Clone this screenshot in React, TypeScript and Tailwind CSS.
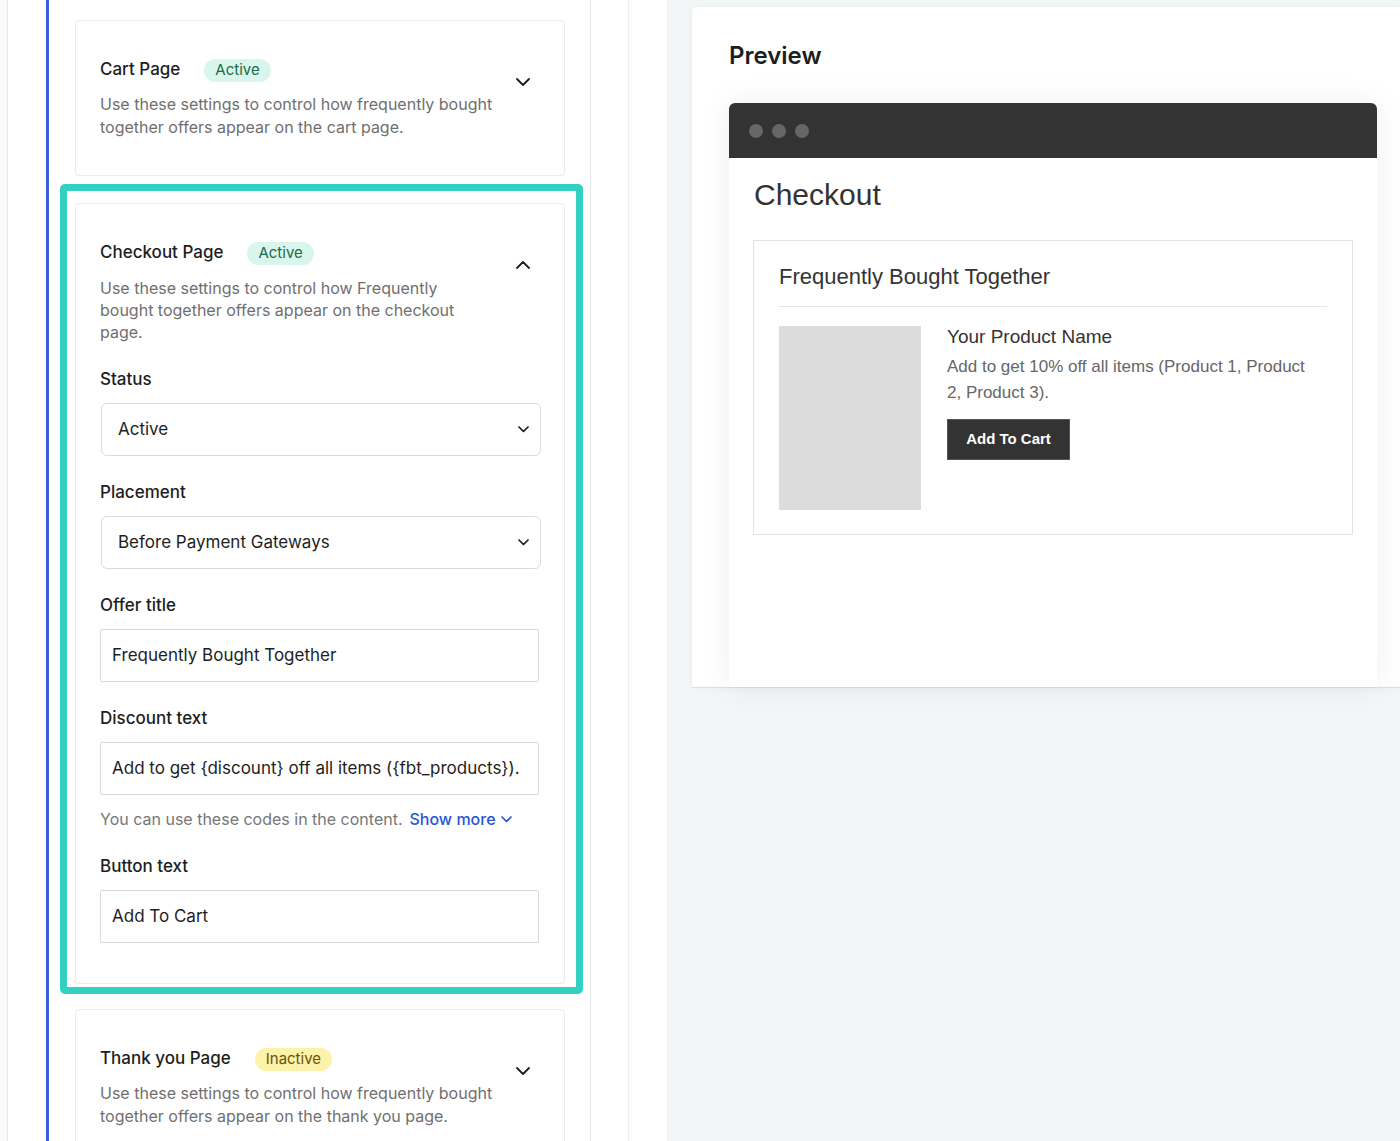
import type { ReactNode } from "react";

const sans = "font-['Inter','Noto_Sans',sans-serif]";

function Chevron({ up = false }: { up?: boolean }) {
  return (
    <svg width="14" height="8" viewBox="0 0 14 8" fill="none" className="shrink-0">
      <path
        d={up ? "M1 7l6-6 6 6" : "M1 1l6 6 6-6"}
        stroke="#1e1e1e"
        strokeWidth="1.8"
        strokeLinecap="round"
        strokeLinejoin="round"
      />
    </svg>
  );
}

function SmallChevron({ color = "#1e1e1e" }: { color?: string }) {
  return (
    <svg width="11" height="7" viewBox="0 0 11 7" fill="none" className="shrink-0">
      <path d="M1 1l4.5 4.5L10 1" stroke={color} strokeWidth="1.7" strokeLinecap="round" strokeLinejoin="round" />
    </svg>
  );
}

function Badge({ label, tone }: { label: string; tone: "green" | "yellow" }) {
  const cls =
    tone === "green"
      ? "bg-[#d9f6ec] text-[#1a6b47]"
      : "bg-[#fcf2a9] text-[#6e5200]";
  return (
    <span className={`inline-flex h-[23px] items-center rounded-full px-[11px] text-[15px] ${cls}`}>
      {label}
    </span>
  );
}

function CardHeader({
  title,
  badge,
  lines,
  open = false,
  tight = false,
}: {
  title: string;
  badge: ReactNode;
  lines: string[];
  open?: boolean;
  tight?: boolean;
}) {
  return (
    <div className="flex items-start justify-between">
      <div>
        <div className="flex h-[24px] items-center gap-[24px]">
          <span className="text-[17px] font-medium text-[#1e1e1e]">{title}</span>
          {badge}
        </div>
        <p
          className={`whitespace-nowrap text-[16px] text-[#6f6f6f] ${
            tight ? "mt-[12px] leading-[22px]" : "mt-[11px] leading-[23px]"
          }`}
        >
          {lines.map((l, i) => (
            <span key={i}>
              {l}
              {i < lines.length - 1 && <br />}
            </span>
          ))}
        </p>
      </div>
      <div className="mr-[9px] mt-[20px]">
        <Chevron up={open} />
      </div>
    </div>
  );
}

function Label({ children }: { children: ReactNode }) {
  return <div className="text-[17px] font-medium leading-[24px] text-[#1e1e1e]">{children}</div>;
}

function SelectBox({ value }: { value: string }) {
  return (
    <div className="-mr-[2px] ml-px mt-[12px] flex h-[53px] items-center justify-between rounded-[6px] border border-[#d9dbde] pl-[16px] pr-[11px] text-[17px] text-[#1e1e1e]">
      <span>{value}</span>
      <SmallChevron />
    </div>
  );
}

function TextBox({ value }: { value: string }) {
  return (
    <div className="mt-[12px] flex h-[53px] w-[439px] items-center rounded-[2px] border border-[#d6d8db] pl-[11px] text-[17px] text-[#1e1e1e]">
      {value}
    </div>
  );
}

function SettingsColumn() {
  return (
    <div className="flex w-[583px] shrink-0 border-r border-[#e3e5e8]">
      <div className="w-[38px] shrink-0" />
      <div className="w-[3px] shrink-0 bg-[#3b5fd9]" />
      <div className="w-[516px] shrink-0 pl-[26px] pt-[20px]">
        <div className="rounded-[4px] border border-[#e9ebee] pb-[36px] pl-[24px] pr-[25px] pt-[37px]">
          <CardHeader
            title="Cart Page"
            badge={<Badge label="Active" tone="green" />}
            lines={[
              "Use these settings to control how frequently bought",
              "together offers appear on the cart page.",
            ]}
          />
        </div>

        <div className="relative mt-[27px] rounded-[4px] border border-[#e9ebee] pb-[40px] pl-[24px] pr-[25px] pt-[37px]">
          <div className="pointer-events-none absolute -bottom-[11px] -left-[16px] -right-[19px] -top-[20px] rounded-[5px] border-[7px] border-[#33d0c2]" />
          <CardHeader
            open
            tight
            title="Checkout Page"
            badge={<Badge label="Active" tone="green" />}
            lines={[
              "Use these settings to control how Frequently",
              "bought together offers appear on the checkout",
              "page.",
            ]}
          />

          <div className="mt-[24px]">
            <Label>Status</Label>
            <SelectBox value="Active" />
          </div>
          <div className="mt-[24px]">
            <Label>Placement</Label>
            <SelectBox value="Before Payment Gateways" />
          </div>
          <div className="mt-[24px]">
            <Label>Offer title</Label>
            <TextBox value="Frequently Bought Together" />
          </div>
          <div className="mt-[24px]">
            <Label>Discount text</Label>
            <TextBox value="Add to get {discount} off all items ({fbt_products})." />
            <div className="mt-[13px] flex items-center text-[16px] leading-[22px] text-[#767676]">
              <span>You can use these codes in the content.</span>
              <span className="ml-[7px] font-medium text-[#2457d4]">Show more</span>
              <span className="ml-[5px]">
                <SmallChevron color="#2457d4" />
              </span>
            </div>
          </div>
          <div className="mt-[24px]">
            <Label>Button text</Label>
            <TextBox value="Add To Cart" />
          </div>
        </div>

        <div className="mt-[25px] rounded-[4px] border border-[#e9ebee] pb-[37px] pl-[24px] pr-[25px] pt-[37px]">
          <CardHeader
            title="Thank you Page"
            badge={<Badge label="Inactive" tone="yellow" />}
            lines={[
              "Use these settings to control how frequently bought",
              "together offers appear on the thank you page.",
            ]}
          />
        </div>
      </div>
    </div>
  );
}

function PreviewPanel() {
  const pv = "font-['Liberation_Sans','Helvetica',sans-serif]";
  return (
    <div className="min-w-0 flex-1 pl-[25px] pt-[7px]">
      <div className="h-[681px] rounded-tl-[4px] border-b border-[#dcdfe2] bg-white pl-[37px] shadow-[0_0_6px_rgba(0,0,0,0.04)]">
        <h2 className="pt-[34px] text-[24px] font-semibold leading-[30px] text-[#1e1e1e]">Preview</h2>
        <div className={`mt-[32px] flex h-[584px] w-[648px] flex-col bg-white shadow-[0_0_30px_rgba(0,0,0,0.07)] ${pv}`}>
          <div className="flex h-[55px] items-center gap-[9px] rounded-t-[6px] bg-[#333333] pl-[20px]">
            <span className="h-[14px] w-[14px] rounded-full bg-[#666666]" />
            <span className="h-[14px] w-[14px] rounded-full bg-[#666666]" />
            <span className="h-[14px] w-[14px] rounded-full bg-[#666666]" />
          </div>
          <div className="px-[24px]">
            <div className="pl-px pt-[19px] text-[30px] leading-[36px] text-[#333333]">Checkout</div>
            <div className="mt-[27px] border border-[#e2e2e2] px-[25px] pb-[24px] pt-[21px]">
              <div className="text-[22px] leading-[30px] text-[#333333]">Frequently Bought Together</div>
              <div className="mt-[14px] h-px bg-[#e6e6e6]" />
              <div className="mt-[19px] flex gap-[26px]">
                <div className="h-[184px] w-[142px] shrink-0 bg-[#dcdcdc]" />
                <div>
                  <div className="-mt-px text-[19px] leading-[24px] text-[#333333]">Your Product Name</div>
                  <p className="mt-[5px] whitespace-nowrap text-[17px] leading-[26px] text-[#666666]">
                    Add to get 10% off all items (Product 1, Product
                    <br />
                    2, Product 3).
                  </p>
                  <div className="mt-[13px] inline-flex h-[41px] w-[123px] items-center justify-center border border-[#555] bg-[#333333] text-[15px] font-bold text-white">
                    Add To Cart
                  </div>
                </div>
              </div>
            </div>
          </div>
        </div>
      </div>
    </div>
  );
}

export default function App() {
  return (
    <div className={`flex h-[1141px] w-[1400px] overflow-hidden bg-[#f3f6f7] ${sans}`}>
      <div className="flex w-[667px] shrink-0 bg-white">
        <div className="w-[8px] shrink-0 border-r border-[#e6e8ea] bg-[#fafbfb]" />
        <SettingsColumn />
        <div className="w-[38px] shrink-0 border-r border-[#eceef0]" />
      </div>
      <PreviewPanel />
    </div>
  );
}
